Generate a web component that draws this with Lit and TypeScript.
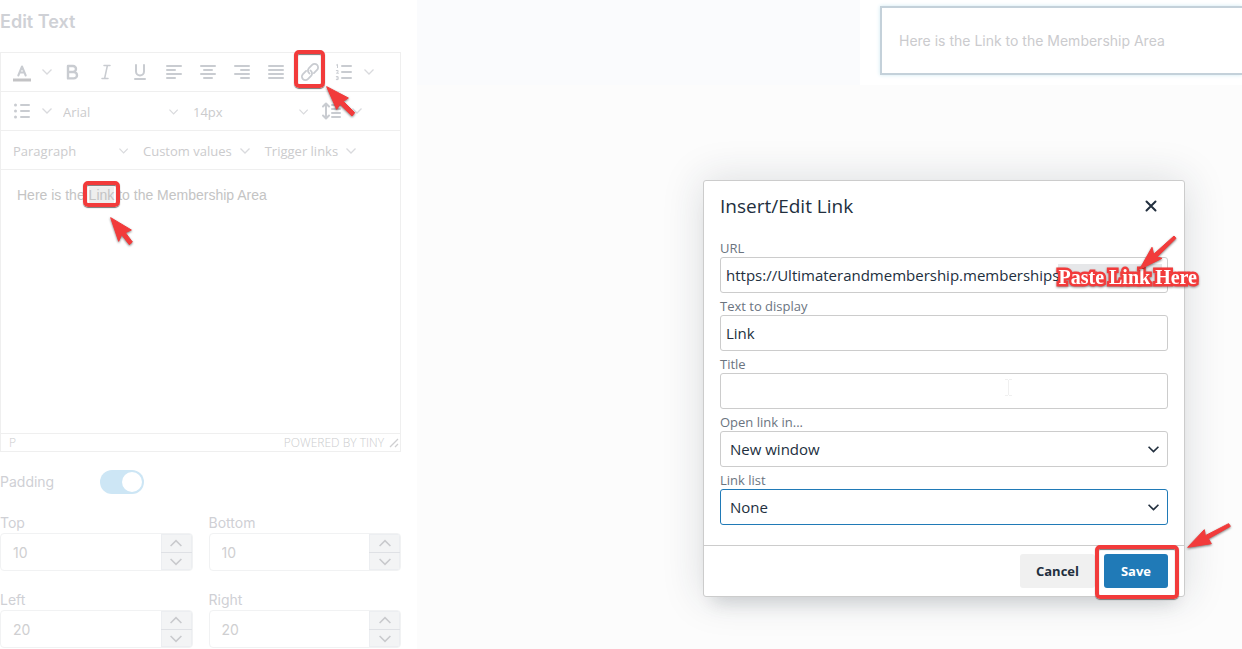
import { LitElement, html, css, svg, nothing } from "lit";
import { customElement, property } from "lit/decorators.js";

const chevron = (size = 10) => html`<svg class="chev" width=${size} height=${size} viewBox="0 0 10 10" aria-hidden="true">
  <path d="M0.5 2.5 5 7 9.5 2.5" fill="none" stroke="currentColor" stroke-width="1.3" /></svg>`;

const lines = (rows: number[][]) =>
  rows.map(([x1, x2], i) => svg`<path d="M${x1} ${6 + i * 4}H${x2}" />`);

const glyphs: Record<string, unknown> = {
  color: svg`<path d="M3 20h18" stroke="#c3c3c5" stroke-width="3" stroke-linecap="butt"/><path d="M8.3 15.5 12 6.5l3.7 9M9.6 12.6h4.8" />`,
  bold: svg`<path d="M8 6h5a3 3 0 0 1 0 6H8zM8 12h5.8a3.2 3.2 0 0 1 0 6.4H8z" stroke-width="2.4"/>`,
  italic: svg`<path d="M10 5.5h6M8 18.5h6M13.4 5.5 10.6 18.5" stroke-width="1.5"/>`,
  underline: svg`<path d="M8 5v6.5a4 4 0 0 0 8 0V5M7 19h10"/>`,
  left: lines([[5, 19], [5, 13], [5, 19], [5, 13]]),
  center: lines([[5, 19], [8, 16], [5, 19], [8, 16]]),
  right: lines([[5, 19], [11, 19], [5, 19], [11, 19]]),
  justify: lines([[5, 19], [5, 19], [5, 19], [5, 19]]),
  link: svg`<g transform="rotate(-45 12 12)" stroke-width="1.8"><path d="M10 8.5H5.5a3.5 3.5 0 0 0 0 7H10a3.5 3.5 0 0 0 3.4-4.2"/><path d="M14 15.5h4.5a3.5 3.5 0 0 0 0-7H14a3.5 3.5 0 0 0-3.4 4.2"/></g>`,
  numbers: svg`<path d="M10 6h9M10 12h9M10 18h9"/><path d="M4.5 5l1-.6v3.2M4.3 10.6h1.8v1.1L4.5 13.2h2M4.3 16.6h1.8v3H4.3M4.8 18h1.2" stroke-width="1"/>`,
  bullets: svg`<path d="M11 6h8M11 12h8M11 18h8"/><path d="M5.5 6v.01M5.5 12v.01M5.5 18v.01" stroke-width="3"/>`,
  spacing: svg`<path d="M12 6h8M12 10h8M12 14h8M12 18h8M6 5v14M3 7.5 6 4.5l3 3M3 16.5l3 3 3-3"/>`,
};

const icon = (name: string) => html`<svg width="24" height="24" viewBox="0 0 24 24" fill="none" stroke="currentColor"
  stroke-width="2" stroke-linecap="round" stroke-linejoin="round" aria-hidden="true">${glyphs[name]}</svg>`;

const arrow = (cls: string, w: number, h: number, d: string) => html`<svg class="arrow ${cls}" width=${w} height=${h}
  viewBox="0 0 ${w * 3} ${h * 3}" aria-hidden="true"><path d=${d} fill="#f23b3b" stroke="#f23b3b" stroke-width="3" stroke-linejoin="round" /></svg>`;

@customElement("number-field")
class NumberField extends LitElement {
  @property() label = "";
  @property() value = "";
  static styles = css`
    :host { display: block; min-width: 0; }
    label { display: block; line-height: 20px; color: #cfd0d5; }
    .box { display: flex; height: 38px; box-sizing: border-box; border: 1px solid #f1f2f3; border-radius: 4px; overflow: hidden; }
    input { flex: 1; min-width: 0; border: 0; outline: 0; padding: 2px 12px 0; background: none; color: #cfcfd1; font: inherit; }
    .steps { display: grid; grid-template-rows: 1fr 1fr; width: 31px; background: #f3f4f5; box-shadow: inset 0 0 0 1px #eceef1; }
    button { display: grid; place-items: center; border: 0; padding: 0; background: none; color: #c9cacd; }
    button + button { border-top: 1px solid #dfe1e5; }
    .up svg { transform: rotate(180deg); }
  `;
  render() {
    return html`<label for="n">${this.label}</label>
      <div class="box"><input id="n" inputmode="numeric" .value=${this.value} />
        <div class="steps">
          <button class="up" aria-label="Increase">${chevron(12)}</button>
          <button aria-label="Decrease">${chevron(12)}</button>
        </div></div>`;
  }
}

@customElement("app-root")
class AppRoot extends LitElement {
  static styles = css`
    :host { display: block; position: relative; min-height: 100vh; background: #fff; overflow: hidden; font: 14px/20px Inter, sans-serif; }
    * { box-sizing: border-box; }
    button, input, select { font: inherit; color: inherit; margin: 0; }
    button { border: 0; background: none; padding: 0; }
    select { appearance: none; border: 0; background: none; outline: 0; width: 100%; }
    .page { display: grid; grid-template-columns: 417px 1fr; min-height: 100vh; }
    .side { padding: 10px 16px 0 0; color: #cfd0d5; }
    h2 { margin: 0 0 18px; font-size: 18px; line-height: 24px; font-weight: 600; color: #cfd1d6; }

    .editor { display: flex; flex-direction: column; height: 400px; border: 1px solid #efefef; margin-bottom: 18px; font-family: "Open Sans", sans-serif; font-size: 13px; }
    .bar { display: flex; height: 39px; padding-left: 4px; border-bottom: 1px solid #efefef; color: #c9ccd1; }
    .tool { position: relative; display: grid; place-items: center; width: 34px; }
    .more { display: grid; place-items: center; width: 16px; }
    .chev { color: #d9dadd; }
    .pick { position: relative; display: flex; align-items: center; width: 130px; padding: 1px 7px 0 8px; color: #cbcbcd; }
    .menu { width: auto; gap: 8px; }
    .pick select { height: 100%; padding: 0; }
    .text { flex: 1; padding: 16px; font: 14px/18px "Liberation Sans", Arial, sans-serif; color: #c4c4c4; outline: 0; }
    .text p { margin: 0; }
    .sel { position: relative; background: #eee; }
    .status { display: flex; align-items: center; height: 18px; padding: 1px 0 0 8px; border-top: 1px solid #efefef; font-size: 12px; font-weight: 300; color: #cbccce; }
    .status a { margin-left: auto; margin-right: 5px; color: inherit; text-decoration: none; }

    .row { display: flex; align-items: center; height: 24px; margin-bottom: 19px; }
    .row label { width: 100px; }
    .switch { appearance: none; width: 44px; height: 24px; border-radius: 12px; background: #cde6f5; padding: 2px; display: flex; justify-content: flex-end; }
    .switch::before { content: ""; width: 20px; height: 20px; border-radius: 50%; background: #fff; }
    .sides { display: grid; grid-template-columns: 1fr 1fr; gap: 19px 16px; }

    .canvas { background: #fcfcfc; min-width: 0; }
    .strip { display: flex; height: 85px; background: #fafbfd; }
    .gutter { flex: 0 0 443px; }
    .sheet { flex: 1; background: #fff; padding: 6px 0 10px 20px; }
    .block { height: 69px; display: flex; align-items: center; padding-left: 17px; border: 2px solid #c4d1da; border-right: 0; box-shadow: 0 0 4px #cfe9f2; color: #cbcbce; white-space: nowrap; }

    .layer { position: absolute; inset: 0; display: flex; justify-content: flex-end; align-items: flex-start; padding: 180px 57px 0 0; pointer-events: none; }
    .dialog { pointer-events: auto; position: relative; width: 482px; background: #fff; border: 1px solid #ccc; border-radius: 3px; color: #222f3e; font: 15px/20px "Open Sans", sans-serif;
      box-shadow: 0 16px 16px -10px rgba(34, 47, 62, .15), 0 0 40px 1px rgba(34, 47, 62, .15); }
    .head { display: flex; align-items: center; justify-content: space-between; height: 54px; padding: 0 16px 4px; }
    h1 { margin: 0; font-size: 19px; line-height: 24px; font-weight: 400; }
    .close { width: 34px; height: 34px; display: grid; place-items: center; }
    .form { padding: 0 16px 20px; }
    .form label { display: block; height: 22px; padding-top: 3px; font-size: 13px; line-height: 20px; color: #6b747f; }
    .field { position: relative; display: flex; align-items: center; height: 36px; border: 1px solid #ccc; border-radius: 3px; }
    .field input { width: 100%; height: 100%; border: 0; outline: 0; background: none; padding: 0 5px; }
    .field select { height: 100%; padding: 0 9px; }
    .field .chev { position: absolute; right: 8px; color: #222f3e; pointer-events: none; }
    .field .chev path { stroke-width: 1.5; }
    .focus { border-color: #207ab7; }
    .foot { display: flex; justify-content: flex-end; gap: 9px; padding: 8px 16px; border-top: 1px solid #ccc; font-size: 13px; font-weight: 700; }
    .foot button { position: relative; height: 34px; min-width: 64px; padding: 0 16px; border-radius: 3px; background: #f0f0f0; }
    .foot .save { background: #207ab7; color: #fff; }

    .ring { position: absolute; border: 4px solid #f23b3b; border-radius: 5px; box-shadow: 0 1px 1px #777, inset 0 1px 1px #777; pointer-events: none; }
    .arrow { position: absolute; z-index: 2; overflow: visible; pointer-events: none; filter: drop-shadow(0 1px 1px rgba(0, 0, 0, .5)); }
    .on-link { inset: -3px 2px 3px 1px; }
    .on-word { inset: -6px -6px -4px -6px; }
    .on-save { inset: -9px -11px -11px -9px; }
    .a-link { left: 33px; top: 33px; }
    .a-word { left: 21px; top: 30px; }
    .a-url { right: -10px; top: -23px; }
    .a-save { left: 83px; top: -31px; }
    .mark { position: absolute; right: 5px; top: 6px; width: 104px; height: 23px; background: #e6e7e9; }
    .note { position: absolute; right: -30px; top: 7px; font: 700 20px/24px "Liberation Serif", serif; color: #fff; white-space: nowrap; -webkit-text-stroke: 5px #f23b3b; paint-order: stroke fill; filter: drop-shadow(0 1px 1px rgba(0, 0, 0, .4)); }
    .beam { position: absolute; right: 154px; top: 5px; }
  `;

  tool(name: string, label: string, extra: unknown = nothing) {
    return html`<button class="tool" aria-label=${label}>${icon(name)}${extra}</button>`;
  }
  more(label: string) {
    return html`<button class="more" aria-label=${label}>${chevron()}</button>`;
  }
  pick(label: string, value: string) {
    return html`<div class="pick"><select aria-label=${label}><option>${value}</option></select>${chevron()}</div>`;
  }

  render() {
    return html`
      <div class="page">
        <aside class="side">
          <h2>Edit Text</h2>
          <section class="editor">
            <div class="bar">
              ${this.tool("color", "Text color")}${this.more("Text colors")}
              ${this.tool("bold", "Bold")}${this.tool("italic", "Italic")}${this.tool("underline", "Underline")}
              ${this.tool("left", "Align left")}${this.tool("center", "Align center")}
              ${this.tool("right", "Align right")}${this.tool("justify", "Justify")}
              ${this.tool("link", "Insert/edit link", html`<span class="ring on-link"></span>
                ${arrow("a-link", 30, 32, "M2 2 67 36 52 46 86 80 78 90 42 55 32 70Z")}`)}
              ${this.tool("numbers", "Numbered list")}${this.more("Numbered list styles")}
            </div>
            <div class="bar">
              ${this.tool("bullets", "Bullet list")}${this.more("Bullet list styles")}
              ${this.pick("Font", "Arial")}${this.pick("Font size", "14px")}
              ${this.tool("spacing", "Line height")}${this.more("Line heights")}
            </div>
            <div class="bar">
              ${this.pick("Block format", "Paragraph")}
              <button class="pick menu">Custom values ${chevron()}</button>
              <button class="pick menu">Trigger links ${chevron()}</button>
            </div>
            <div class="text">
              <p>Here is the <span class="sel">Link<span class="ring on-word"></span>${arrow("a-word", 24, 29, "M2 2 64 39 46 47 67 75 58 83 35 53 26 73Z")}</span> to the Membership Area</p>
            </div>
            <div class="status"><span>P</span><a href="#tiny">POWERED BY TINY</a>
              <svg width="11" height="10" viewBox="0 0 11 10" aria-hidden="true"><path d="M1 9 9 1M6 9l3-3" stroke="#cfcfd1" stroke-width="1.3" /></svg>
            </div>
          </section>
          <div class="row"><label for="pad">Padding</label><input id="pad" class="switch" type="checkbox" role="switch" checked /></div>
          <div class="sides">
            <number-field label="Top" value="10"></number-field>
            <number-field label="Bottom" value="10"></number-field>
            <number-field label="Left" value="20"></number-field>
            <number-field label="Right" value="20"></number-field>
          </div>
        </aside>
        <main class="canvas">
          <div class="strip"><div class="gutter"></div>
            <div class="sheet"><div class="block">Here is the Link to the Membership Area</div></div>
          </div>
        </main>
      </div>
      <div class="layer">
        <div class="dialog" role="dialog" aria-labelledby="title">
          <div class="head"><h1 id="title">Insert/Edit Link</h1>
            <button class="close" aria-label="Close"><svg width="12" height="12" viewBox="0 0 12 12"><path d="M1.5 1.5l9 9M10.5 1.5l-9 9" stroke="#222f3e" stroke-width="2" stroke-linecap="round" /></svg></button>
          </div>
          <div class="form">
            <label for="url">URL</label>
            <div class="field"><input id="url" value="https://Ultimaterandmembership.memberships" />
              <span class="mark"></span><span class="note">Paste Link Here</span>
              ${arrow("a-url", 38, 36, "M2 103 39 37 44 58 105 3 111 10 54 66 69 70Z")}
            </div>
            <label for="txt">Text to display</label>
            <div class="field"><input id="txt" value="Link" /></div>
            <label for="ttl">Title</label>
            <div class="field"><input id="ttl" value="" />
              <svg class="beam" width="9" height="17" viewBox="0 0 9 17" aria-hidden="true"><path d="M1 .5h3M5 .5h3M4.5 1v15M1 16.5h3M5 16.5h3" stroke="#f0f0f0" /></svg>
            </div>
            <label for="open">Open link in...</label>
            <div class="field"><select id="open"><option>New window</option></select>${chevron(11)}</div>
            <label for="list">Link list</label>
            <div class="field focus"><select id="list"><option>None</option></select>${chevron(11)}</div>
          </div>
          <div class="foot"><button>Cancel</button>
            <button class="save">Save<span class="ring on-save"></span>${arrow("a-save", 43, 25, "M2 73 52 20 55 38 125 2 130 10 64 47 73 62Z")}</button>
          </div>
        </div>
      </div>`;
  }
}
